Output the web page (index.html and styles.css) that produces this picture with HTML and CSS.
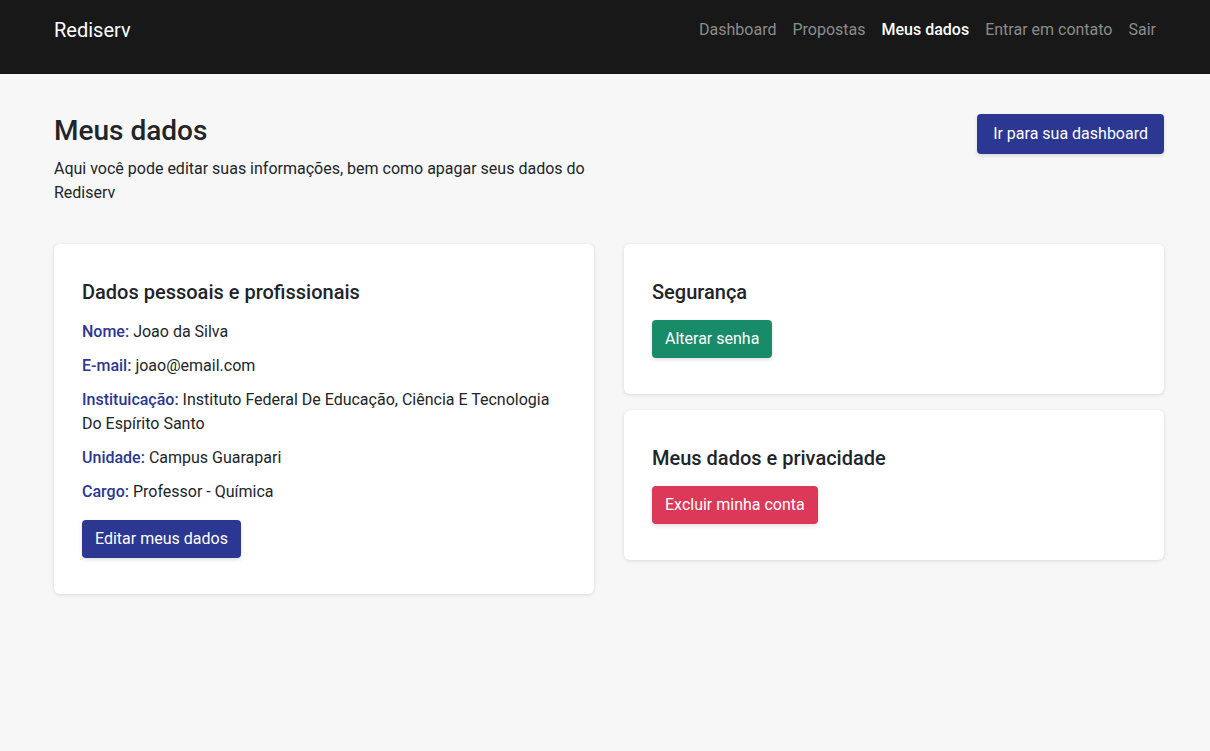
FILE: index.html
```html
<!DOCTYPE html>
<html lang="pt-BR">
<head>
<meta charset="utf-8">
<title>Meus dados - Rediserv</title>
<link rel="stylesheet" href="styles.css">
</head>
<body>
<header class="navbar">
  <div class="container nav-inner">
    <a class="brand" href="#">Rediserv</a>
    <nav class="nav-links">
      <a href="#">Dashboard</a>
      <a href="#">Propostas</a>
      <a href="#" class="active">Meus dados</a>
      <a href="#">Entrar em contato</a>
      <a href="#">Sair</a>
    </nav>
  </div>
</header>
<main class="container main">
  <section class="page-head">
    <div class="page-intro">
      <h1>Meus dados</h1>
      <p>Aqui você pode editar suas informações, bem como apagar seus dados do Rediserv</p>
    </div>
    <a class="btn btn-primary btn-lg" href="#">Ir para sua dashboard</a>
  </section>
  <section class="cards">
    <div class="card">
      <h2>Dados pessoais e profissionais</h2>
      <p class="field"><span class="label">Nome:</span> Joao da Silva</p>
      <p class="field"><span class="label">E-mail:</span> joao@email.com</p>
      <p class="field"><span class="label">Instituicação:</span> Instituto Federal De Educação, Ciência E Tecnologia Do Espírito Santo</p>
      <p class="field"><span class="label">Unidade:</span> Campus Guarapari</p>
      <p class="field"><span class="label">Cargo:</span> Professor - Química</p>
      <a class="btn btn-primary btn-spaced" href="#">Editar meus dados</a>
    </div>
    <div class="stack">
      <div class="card">
        <h2>Segurança</h2>
        <a class="btn btn-success" href="#">Alterar senha</a>
      </div>
      <div class="card">
        <h2>Meus dados e privacidade</h2>
        <a class="btn btn-danger" href="#">Excluir minha conta</a>
      </div>
    </div>
  </section>
</main>
</body>
</html>
```
FILE: styles.css
```css
* { box-sizing: border-box; }
html, body { margin: 0; padding: 0; }
body {
  font-family: Roboto, "Noto Sans", Arial, sans-serif;
  font-size: 16px;
  line-height: 24px;
  color: #212529;
  background: #f7f7f7;
  min-height: 751px;
}
a { text-decoration: none; }
.container {
  width: 1110px;
  margin-left: 54px;
}
.navbar {
  background: #181818;
  height: 74px;
  padding-top: 18px;
}
.nav-inner {
  display: flex;
  justify-content: space-between;
  align-items: flex-start;
}
.brand {
  color: #fff;
  font-size: 20px;
  line-height: 24px;
}
.nav-links {
  display: flex;
  gap: 16px;
  padding-right: 8px;
}
.nav-links a {
  color: #8c8c8c;
  font-size: 16px;
  line-height: 24px;
}
.nav-links a.active {
  color: #fff;
  font-weight: 500;
}
.main { padding-top: 40px; }
.page-head {
  display: flex;
  justify-content: space-between;
  align-items: flex-start;
}
.page-intro { width: 540px; }
h1 {
  margin: 0 0 9px;
  font-size: 28px;
  line-height: 34px;
  font-weight: 500;
  color: #212529;
}
.page-intro p { margin: 0; }
.btn {
  display: inline-block;
  color: #fff;
  font-size: 16px;
  line-height: 24px;
  padding: 7px 13px;
  border-radius: 4px;
  box-shadow: 0 2px 4px rgba(0,0,0,0.12);
}
.btn-lg { padding: 8px 16px; }
.btn-primary { background: #2b3790; }
.btn-success { background: #188c68; }
.btn-danger { background: #dc3858; }
.btn-spaced { margin-top: 6px; }
.cards {
  display: grid;
  grid-template-columns: 540px 540px;
  gap: 30px;
  margin-top: 39px;
  align-items: start;
}
.stack {
  display: flex;
  flex-direction: column;
  gap: 16px;
}
.card {
  background: #fff;
  border-radius: 6px;
  padding: 36px 28px;
  box-shadow: 0 1px 4px rgba(0,0,0,0.12);
}
h2 {
  margin: 0 0 16px;
  font-size: 20px;
  line-height: 24px;
  font-weight: 500;
  color: #212529;
}
.field { margin: 0 0 10px; }
.label { color: #2b3790; font-weight: 500; }
```
